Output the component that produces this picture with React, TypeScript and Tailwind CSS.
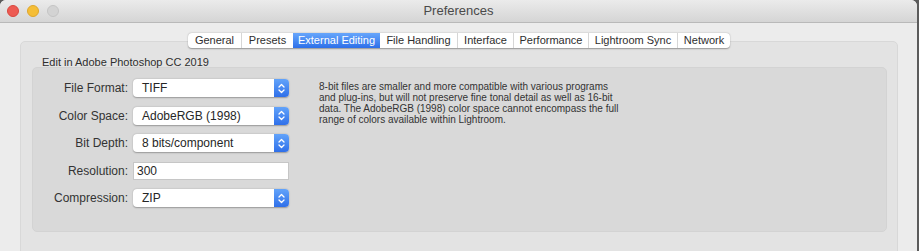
import type { ReactNode } from "react";

const tabs = [
  { label: "General", w: "w-[53px]" },
  { label: "Presets", w: "w-[52px]" },
  { label: "External Editing", w: "w-[87px]", active: true },
  { label: "File Handling", w: "w-[77px]" },
  { label: "Interface", w: "w-[56px]" },
  { label: "Performance", w: "w-[75px]" },
  { label: "Lightroom Sync", w: "w-[89px]" },
  { label: "Network", w: "w-[53px]" },
];

const Stepper = () => (
  <div className="w-[15px] h-full rounded-r-[4px] bg-gradient-to-b from-[#62a3fa] to-[#2f6fe9] flex items-center justify-center">
    <svg width="7" height="11" viewBox="0 0 7 11" fill="none">
      <path d="M1 4 L3.5 1.5 L6 4" stroke="white" strokeWidth="1.3" strokeLinecap="round" strokeLinejoin="round" />
      <path d="M1 7 L3.5 9.5 L6 7" stroke="white" strokeWidth="1.3" strokeLinecap="round" strokeLinejoin="round" />
    </svg>
  </div>
);

const Select = ({ value }: { value: string }) => (
  <div className="w-[156px] h-[18px] flex bg-white rounded-[4px] shadow-[0_0.5px_1.5px_rgba(0,0,0,0.3)]">
    <div className="flex-1 pl-[9px] text-[12px] leading-[18px] text-[#262626]">{value}</div>
    <Stepper />
  </div>
);

const Row = ({ label, children }: { label: string; children: ReactNode }) => (
  <div className="flex items-center h-[18px]">
    <div className="w-[100px] pr-[5px] text-right text-[12px] text-[#333]">{label}</div>
    {children}
  </div>
);

export default function App() {
  return (
    <div className="w-[919px] h-[251px] bg-[#5b5b5b] overflow-hidden" style={{ fontFamily: '"Liberation Sans", Arial, sans-serif' }}>
      <div className="w-[917px] h-[251px] bg-[#ececec] rounded-t-[6px] overflow-hidden flex flex-col">
        {/* title bar */}
        <div className="relative h-[23px] shrink-0 bg-gradient-to-b from-[#ebebeb] to-[#d5d5d5] border-b border-[#b9b9b9] flex items-center justify-center">
          <div className="absolute left-[7px] top-[5px] flex gap-[8px]">
            <div className="w-[12px] h-[12px] rounded-full bg-[#ed5b53] border border-[#d8483f]" />
            <div className="w-[12px] h-[12px] rounded-full bg-[#f5be36] border border-[#dea62b]" />
            <div className="w-[12px] h-[12px] rounded-full bg-[#d3d3d3] border border-[#c4c4c4]" />
          </div>
          <span className="text-[13px] text-[#4a4a4a]">Preferences</span>
        </div>

        {/* body */}
        <div className="flex-1 pl-[20px] pr-[19px] pt-[10px]">
          <div className="relative z-10 flex justify-center mb-[-7px]">
            <div className="flex h-[15px] bg-white rounded-[4px] shadow-[0_0.5px_1.5px_rgba(0,0,0,0.35)] overflow-hidden">
              {tabs.map((t, i) => (
                <div
                  key={t.label}
                  className={`${t.w} flex items-center justify-center text-[11px] ${
                    t.active
                      ? "bg-gradient-to-b from-[#67a6fb] to-[#2d6fe9] text-white"
                      : `text-[#2e2e2e] ${i > 0 && !tabs[i - 1].active ? "border-l border-[#d6d6d6]" : ""}`
                  }`}
                >
                  {t.label}
                </div>
              ))}
            </div>
          </div>

          <div className="h-[230px] bg-[#e3e3e3] border border-[#d8d8d8] rounded-[5px] pl-[11px] pr-[10px] pt-[15px]">
            <div className="pl-[10px] text-[11px] leading-[11px] text-[#2e2e2e]">Edit in Adobe Photoshop CC 2019</div>
            <div className="mt-[-1px] h-[165px] bg-[#d9d9d9] rounded-[5px] border border-[#d3d3d3] flex pt-[11px]">
              <div className="flex flex-col gap-[9.5px]">
                <Row label="File Format:">
                  <Select value="TIFF" />
                </Row>
                <Row label="Color Space:">
                  <Select value="AdobeRGB (1998)" />
                </Row>
                <Row label="Bit Depth:">
                  <Select value="8 bits/component" />
                </Row>
                <Row label="Resolution:">
                  <div className="w-[156px] h-[18px] bg-white border border-[#c6c6c6] pl-[3px] text-[12px] leading-[16px] text-[#262626]">
                    300
                  </div>
                </Row>
                <Row label="Compression:">
                  <Select value="ZIP" />
                </Row>
              </div>
              <div className="ml-[30px] pt-[2px] text-[10px] leading-[11px] text-[#333]">
                8-bit files are smaller and more compatible with various programs
                <br />
                and plug-ins, but will not preserve fine tonal detail as well as 16-bit
                <br />
                data. The AdobeRGB (1998) color space cannot encompass the full
                <br />
                range of colors available within Lightroom.
              </div>
            </div>
          </div>
        </div>
      </div>
    </div>
  );
}
